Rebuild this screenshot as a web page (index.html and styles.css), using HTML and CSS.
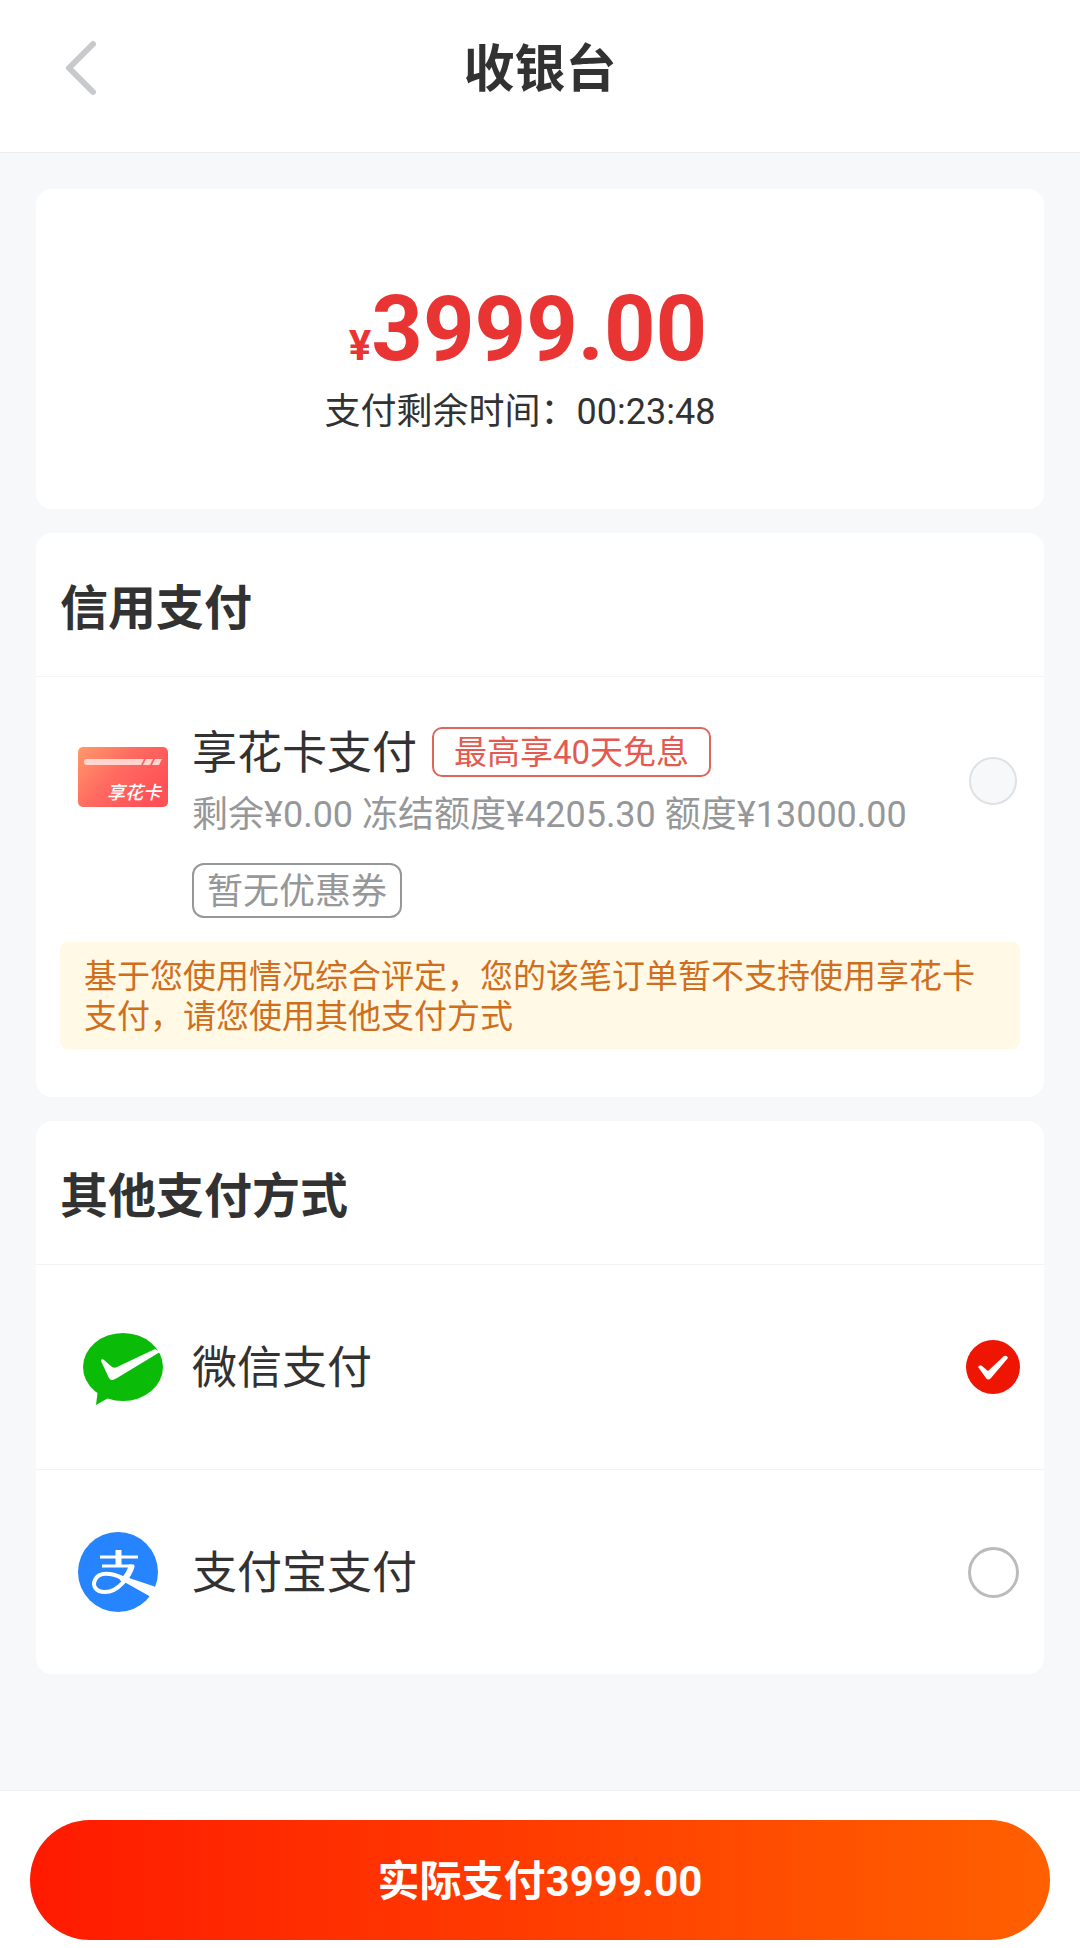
FILE: index.html
```html
<!DOCTYPE html>
<html lang="zh-CN">
<head>
<meta charset="utf-8">
<meta name="viewport" content="width=device-width, initial-scale=1">
<title>收银台</title>
<link rel="stylesheet" href="styles.css">
</head>
<body>
<form class="page">
  <header class="topbar">
    <button class="back" type="button" aria-label="返回">
      <svg width="36" height="60" viewBox="0 0 36 60" fill="none" stroke="#c8c9cc" stroke-width="6" stroke-linecap="round" stroke-linejoin="round"><path d="M31 6 7 30l24 24"/></svg>
    </button>
    <h1 class="topbar-title">收银台</h1>
  </header>

  <main class="content">
    <section class="card amount">
      <p class="price"><span class="currency">¥</span>3999.00</p>
      <p class="countdown">支付剩余时间：00:23:48</p>
    </section>

    <section class="card">
      <h2 class="card-title">信用支付</h2>
      <div class="credit">
        <label class="method">
          <svg class="icon" width="90" height="68" viewBox="0 0 90 68">
            <defs><linearGradient id="cardFill" x1="0" y1="0" x2="1" y2="0.6"><stop offset="0" stop-color="#ff9a6c"/><stop offset="0.5" stop-color="#ff6a60"/><stop offset="1" stop-color="#ff5058"/></linearGradient></defs>
            <rect width="90" height="60" rx="5" fill="url(#cardFill)"/>
            <path d="M9 12h57l-3 6H9a3 3 0 0 1 0-6zM68 12h7l-3 6h-7zM77 12h7l-3 6h-7z" fill="#ffd5d0"/>
            <text class="icon-text" x="29" y="52">享花卡</text>
          </svg>
          <span class="method-text">
            <span class="method-head"><span class="method-name">享花卡支付</span><span class="tag">最高享40天免息</span></span>
            <span class="balance">剩余¥0.00 冻结额度¥4205.30 额度¥13000.00</span>
          </span>
          <span class="choice"><input class="radio" type="radio" name="method" value="card" disabled></span>
        </label>
        <button class="coupon" type="button">暂无优惠券</button>
        <p class="notice">基于您使用情况综合评定，您的该笔订单暂不支持使用享花卡支付，请您使用其他支付方式</p>
      </div>
    </section>

    <section class="card">
      <h2 class="card-title">其他支付方式</h2>
      <label class="method method-simple">
        <svg class="icon" width="90" height="76" viewBox="0 -4 90 76">
          <ellipse cx="45" cy="34" rx="40" ry="34" fill="#0abb07"/>
          <path d="M20 56 18 72l14-8z" fill="#0abb07"/>
          <path d="M23 28c0-2 2-2 3-1l8 7c2 1 3 1 5 0l38-18 5 3-43 26c-5 3-7 3-9-2z" fill="#fff"/>
        </svg>
        <span class="method-name">微信支付</span>
        <span class="choice">
          <input class="radio" type="radio" name="method" value="wechat" checked>
          <svg class="tick" width="54" height="54" viewBox="0 0 54 54"><path d="M12 27q2-3 4-1l6 5 16-15q3-1 4 2L25 38q-3 3-5 0z" fill="#fff"/></svg>
        </span>
      </label>
      <label class="method method-simple">
        <svg class="icon" width="90" height="80" viewBox="0 0 90 80">
          <circle cx="40" cy="40" r="40" fill="#2684ff"/>
          <g fill="none" stroke="#fff">
            <path d="M22 25h38M24 34h32" stroke-width="3"/>
            <path d="M40.500 18v16" stroke-width="6"/>
            <path d="M54 33C51 46 40 60 27 60c-9 0-13-6-10-12 4-9 17-7 27-2" stroke-width="4"/>
            <path d="M54 33C52 40 49 45 44 50" stroke-width="6"/>
          </g>
          <path d="M36 41 78 55 73 65 41 47z" fill="#fff"/>
        </svg>
        <span class="method-name">支付宝支付</span>
        <span class="choice">
          <input class="radio" type="radio" name="method" value="alipay">
          <svg class="tick" width="54" height="54" viewBox="0 0 54 54"><path d="M12 27q2-3 4-1l6 5 16-15q3-1 4 2L25 38q-3 3-5 0z" fill="#fff"/></svg>
        </span>
      </label>
    </section>
  </main>

  <footer class="paybar">
    <button class="pay" type="submit">实际支付3999.00</button>
  </footer>
</form>
</body>
</html>
```
FILE: styles.css
```css
* {
  box-sizing: border-box;
}

body,
h1,
h2,
p {
  margin: 0;
}

body {
  background: #f7f8fa;
  color: #323233;
  font-family: Roboto, "Noto Sans CJK SC", sans-serif;
}

button {
  font-family: inherit;
  cursor: pointer;
}

.page {
  display: flex;
  flex-direction: column;
  min-height: 100vh;
}

.topbar {
  display: grid;
  grid-template-columns: 120px 1fr 120px;
  align-items: center;
  padding: 30px 0 46px;
  background: #fff;
  border-bottom: 1px solid #ebedf0;
}

.back {
  display: flex;
  justify-content: flex-end;
  padding: 0 22px 0 0;
  border: 0;
  background: none;
}

.topbar-title {
  padding-top: 4px;
  font-size: 51px;
  line-height: 72px;
  text-align: center;
}

.content {
  display: flex;
  flex-direction: column;
  gap: 24px;
  padding: 36px 36px 48px;
}

.card {
  background: #fff;
  border-radius: 16px;
}

.amount {
  padding: 88px 0 72px;
  text-align: center;
}

.price {
  padding-right: 24px;
  color: #e93434;
  font-size: 90px;
  font-weight: 700;
  line-height: 106px;
}

.currency {
  font-size: 42px;
  line-height: 1;
}

.countdown {
  margin-top: 4px;
  padding-right: 40px;
  font-size: 36px;
  line-height: 50px;
}

.card-title {
  padding: 40px 24px 31px;
  font-size: 48px;
  line-height: 72px;
}

.credit {
  padding-bottom: 48px;
  border-top: 1px solid #f5f5f5;
}

.method {
  display: flex;
  align-items: center;
  gap: 24px;
  padding: 48px 24px 26px 42px;
}

.method-simple {
  min-height: 205px;
  padding: 24px 24px 24px 42px;
  border-top: 1px solid #f2f3f5;
}

.icon {
  flex: none;
}

.icon-text {
  fill: #fff;
  font-size: 18px;
  font-style: italic;
  font-weight: 500;
}

.method-text {
  display: flex;
  flex-direction: column;
  gap: 14px;
}

.method-head {
  display: flex;
  align-items: center;
  gap: 15px;
}

.method-name {
  padding-top: 4px;
  font-size: 45px;
  line-height: 50px;
}

.tag {
  padding: 2px 20px 0;
  border: 2px solid #dd655c;
  border-radius: 10px;
  color: #e55a50;
  font-size: 33px;
  line-height: 44px;
}

.balance {
  color: #969799;
  font-size: 36px;
  line-height: 44px;
}

.choice {
  display: grid;
  place-items: center;
  width: 54px;
  height: 54px;
  margin-left: auto;
}

.radio {
  grid-area: 1 / 1;
  appearance: none;
  width: 51px;
  height: 51px;
  margin: 0;
  border: 3px solid #bbb;
  border-radius: 50%;
}

.radio:disabled {
  width: 48px;
  height: 48px;
  border: 2px solid #dfe2e4;
  background: #f7f8fa;
}

.radio:checked {
  width: 54px;
  height: 54px;
  border: 0;
  background: #ee1503;
}

.tick {
  display: none;
  grid-area: 1 / 1;
}

.radio:checked + .tick {
  display: block;
}

.coupon {
  display: block;
  margin-left: 156px;
  padding: 3px 13px 0;
  border: 2px solid #969799;
  border-radius: 12px;
  background: none;
  color: #969799;
  font-size: 36px;
  line-height: 48px;
}

.notice {
  margin: 24px 24px 0;
  padding: 15px 24px 12px;
  border-radius: 8px;
  background: #fff9e6;
  color: #cf6f1e;
  font-size: 33px;
  line-height: 40px;
}

.paybar {
  margin-top: auto;
  padding: 29px 30px 8px;
  border-top: 1px solid #f0f1f3;
  background: #fff;
}

.pay {
  width: 100%;
  height: 120px;
  padding-bottom: 6px;
  border: 0;
  border-radius: 60px;
  background: linear-gradient(90deg, #ff1a00, #ff6000);
  color: #fff;
  font-size: 42px;
  font-weight: 700;
}
```
